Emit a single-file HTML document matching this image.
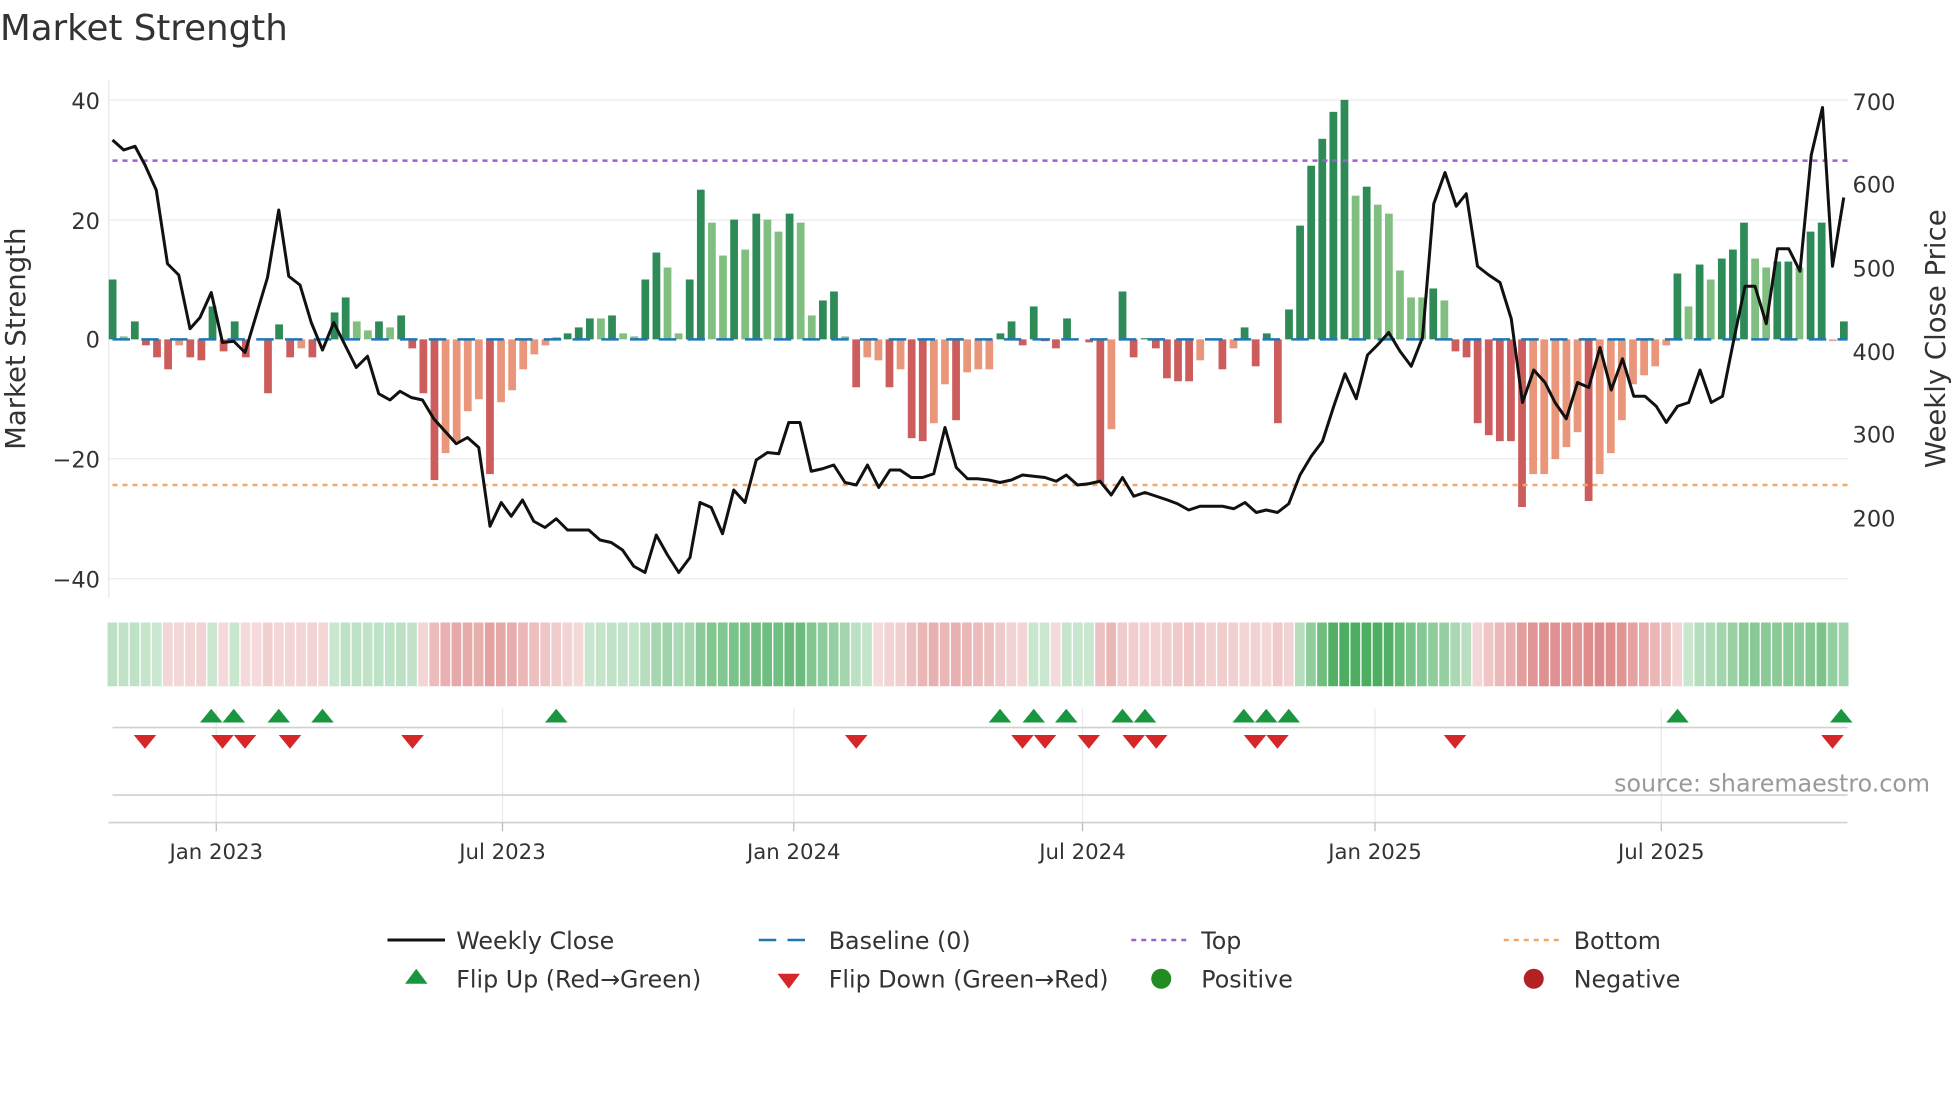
<!DOCTYPE html>
<html><head><meta charset="utf-8"><style>
html,body{margin:0;padding:0;background:#fff;}
svg{display:block;font-family:"DejaVu Sans","Liberation Sans",sans-serif;}
</style></head><body>
<svg id="s" width="1960" height="1102" viewBox="0 0 1568 881.6" xmlns="http://www.w3.org/2000/svg">
<rect width="1568" height="882" fill="#fff"/>
<text x="0" y="32" font-size="28.5" fill="#333">Market Strength</text>
<g stroke="#eceef1" stroke-width="1.2">
<line x1="87" y1="80" x2="1478" y2="80"/><line x1="87" y1="176" x2="1478" y2="176"/>
<line x1="87" y1="367" x2="1478" y2="367"/><line x1="87" y1="463" x2="1478" y2="463"/>
</g>
<line x1="87" y1="64" x2="87" y2="478" stroke="#e6e8eb" stroke-width="1"/>
<g font-size="18" fill="#333" text-anchor="end">
<text x="80" y="87">40</text><text x="80" y="183">20</text><text x="80" y="278">0</text>
<text x="80" y="374">−20</text><text x="80" y="470">−40</text>
</g>
<g font-size="18" fill="#333">
<text x="1482" y="88">700</text><text x="1482" y="154">600</text><text x="1482" y="221">500</text>
<text x="1482" y="288">400</text><text x="1482" y="354">300</text><text x="1482" y="421">200</text>
</g>
<text transform="translate(20,271) rotate(-90)" font-size="22" fill="#333" text-anchor="middle">Market Strength</text>
<text transform="translate(1556,271) rotate(-90)" font-size="22" fill="#333" text-anchor="middle">Weekly Close Price</text>
<g id="bars"></g>
<line x1="90" y1="271.5" x2="1478" y2="271.5" stroke="#1f77b4" stroke-width="2" stroke-dasharray="14 9"/>
<line x1="90" y1="128.5" x2="1478" y2="128.5" stroke="#9b5fd6" stroke-width="2" stroke-dasharray="4 4"/>
<line x1="90" y1="388" x2="1478" y2="388" stroke="#f0a868" stroke-width="2" stroke-dasharray="4 4"/>
<polyline id="price" fill="none" stroke="#111" stroke-width="2.4" stroke-linejoin="round"/>
<g id="heat"></g>
<g stroke="#e8eaed" stroke-width="1">
<line x1="173" y1="567" x2="173" y2="658"/><line x1="402" y1="567" x2="402" y2="658"/>
<line x1="635" y1="567" x2="635" y2="658"/><line x1="866" y1="567" x2="866" y2="658"/>
<line x1="1100" y1="567" x2="1100" y2="658"/><line x1="1329" y1="567" x2="1329" y2="658"/>
</g>
<line x1="90" y1="582" x2="1478" y2="582" stroke="#cfd0d2" stroke-width="1.3"/>
<line x1="90" y1="636" x2="1478" y2="636" stroke="#cfd0d2" stroke-width="1.3"/>
<line x1="87" y1="658" x2="1478" y2="658" stroke="#cfd0d2" stroke-width="1.3"/>
<g stroke="#bbb" stroke-width="1">
<line x1="173" y1="658" x2="173" y2="665"/><line x1="402" y1="658" x2="402" y2="665"/>
<line x1="635" y1="658" x2="635" y2="665"/><line x1="866" y1="658" x2="866" y2="665"/>
<line x1="1100" y1="658" x2="1100" y2="665"/><line x1="1329" y1="658" x2="1329" y2="665"/>
</g>
<g id="marks"></g>
<g font-size="17" fill="#333" text-anchor="middle">
<text x="173" y="687">Jan 2023</text><text x="402" y="687">Jul 2023</text><text x="635" y="687">Jan 2024</text>
<text x="866" y="687">Jul 2024</text><text x="1100" y="687">Jan 2025</text><text x="1329" y="687">Jul 2025</text>
</g>
<text x="1544" y="633" font-size="19" fill="#999" text-anchor="end">source: sharemaestro.com</text>
<g font-size="19" fill="#333">
<line x1="310" y1="752" x2="356" y2="752" stroke="#111" stroke-width="2.4"/><text x="365" y="759">Weekly Close</text>
<line x1="607" y1="752" x2="651" y2="752" stroke="#1f77b4" stroke-width="2" stroke-dasharray="14 9"/><text x="663" y="759">Baseline (0)</text>
<line x1="905" y1="752" x2="949" y2="752" stroke="#9b5fd6" stroke-width="2" stroke-dasharray="4 4"/><text x="961" y="759">Top</text>
<line x1="1203" y1="752" x2="1247" y2="752" stroke="#f0a868" stroke-width="2" stroke-dasharray="4 4"/><text x="1259" y="759">Bottom</text>
<polygon points="324,787 342,787 333,775" fill="#1a9641"/><text x="365" y="790">Flip Up (Red→Green)</text>
<polygon points="622,779 640,779 631,791" fill="#d62728"/><text x="663" y="790">Flip Down (Green→Red)</text>
<circle cx="929" cy="783" r="8" fill="#228b22"/><text x="961" y="790">Positive</text>
<circle cx="1227" cy="783" r="8" fill="#b22222"/><text x="1259" y="790">Negative</text>
</g>
</svg>
<script>
var NS="http://www.w3.org/2000/svg";
var V=[[10,'D'],[0.5,'L'],[3,'D'],[-1,'R'],[-3,'R'],[-5,'R'],[-1,'O'],[-3,'R'],[-3.5,'R'],[5.5,'D'],[-2,'R'],[3,'D'],[-3,'R'],[0,'D'],[-9,'R'],[2.5,'D'],[-3,'R'],[-1.5,'O'],[-3,'R'],[0,'D'],[4.5,'D'],[7,'D'],[3,'L'],[1.5,'L'],[3,'D'],[2,'L'],[4,'D'],[-1.5,'R'],[-9,'R'],[-23.5,'R'],[-19,'O'],[-17,'O'],[-12,'O'],[-10,'O'],[-22.5,'R'],[-10.5,'O'],[-8.5,'O'],[-5,'O'],[-2.5,'O'],[-1,'O'],[0.3,'D'],[1,'D'],[2,'D'],[3.5,'D'],[3.5,'L'],[4,'D'],[1,'L'],[0.5,'L'],[10,'D'],[14.5,'D'],[12,'L'],[1,'L'],[10,'D'],[25,'D'],[19.5,'L'],[14,'L'],[20,'D'],[15,'L'],[21,'D'],[20,'L'],[18,'L'],[21,'D'],[19.5,'L'],[4,'L'],[6.5,'D'],[8,'D'],[0.5,'L'],[-8,'R'],[-3,'O'],[-3.5,'O'],[-8,'R'],[-5,'O'],[-16.5,'R'],[-17,'R'],[-14,'O'],[-7.5,'O'],[-13.5,'R'],[-5.5,'O'],[-5,'O'],[-5,'O'],[1,'D'],[3,'D'],[-1,'R'],[5.5,'D'],[-0.3,'R'],[-1.5,'R'],[3.5,'D'],[0,'D'],[-0.5,'R'],[-24,'R'],[-15,'O'],[8,'D'],[-3,'R'],[0.2,'D'],[-1.5,'R'],[-6.5,'R'],[-7,'R'],[-7,'R'],[-3.5,'O'],[0,'D'],[-5,'R'],[-1.5,'O'],[2,'D'],[-4.5,'R'],[1,'D'],[-14,'R'],[5,'D'],[19,'D'],[29,'D'],[33.5,'D'],[38,'D'],[40,'D'],[24,'L'],[25.5,'D'],[22.5,'L'],[21,'L'],[11.5,'L'],[7,'L'],[7,'L'],[8.5,'D'],[6.5,'L'],[-2,'R'],[-3,'R'],[-14,'R'],[-16,'R'],[-17,'R'],[-17,'R'],[-28,'R'],[-22.5,'O'],[-22.5,'O'],[-20,'O'],[-18,'O'],[-15.5,'O'],[-27,'R'],[-22.5,'O'],[-19,'O'],[-13.5,'O'],[-7.5,'O'],[-6,'O'],[-4.5,'O'],[-1,'O'],[11,'D'],[5.5,'L'],[12.5,'D'],[10,'L'],[13.5,'D'],[15,'D'],[19.5,'D'],[13.5,'L'],[12,'L'],[13,'D'],[13,'D'],[12,'L'],[18,'D'],[19.5,'D'],[-0.3,'P'],[3,'D']];
var C={D:'#2e8b57',L:'#80bf80',R:'#cd5c5c',O:'#e9967a',P:'#e7a0a8'};
var n=V.length,x0=90,x1=1475,dx=(x1-x0)/(n-1);
var bars=document.getElementById('bars'),heat=document.getElementById('heat');
function el(t,a,p){var e=document.createElementNS(NS,t);for(var k in a)e.setAttribute(k,a[k]);p.appendChild(e);return e;}
var ema=0;
for(var i=0;i<n;i++){
 var x=x0+i*dx,v=V[i][0],h=Math.abs(v)*4.79,y=v>=0?271.5-h:271.5;
 if(h>0.3) el('rect',{x:x-3,y:y,width:6.2,height:h,fill:C[V[i][1]]},bars);
 ema=ema*0.7+v*0.3;
 var m=Math.min(Math.abs(ema)/25,1),a=0.25+0.6*m;
 var col=ema>=0?'rgba(46,160,70,'+a.toFixed(2)+')':'rgba(205,80,80,'+(0.2+0.55*m).toFixed(2)+')';
 el('rect',{x:x-4.4+0.4,y:498,width:dx-1.1,height:51,fill:col},heat);
}
var P=[[90,112],[99,120],[108,117],[116,132],[125,152],[134,211],[143,220],[152,263],[160,254],[169,234],[178,274],[187,273],[196,282],[205,252],[214,222],[223,168],[231,221],[240,228],[249,258],[258,280],[267,258],[276,276],[285,294],[294,285],[303,315],[312,320],[320,313],[329,318],[338,320],[347,335],[356,345],[365,355],[374,350],[383,358],[392,421],[401,402],[409,413],[418,400],[427,417],[436,422],[445,415],[454,424],[463,424],[471,424],[480,432],[489,434],[498,440],[507,453],[516,458],[525,428],[534,444],[543,458],[552,446],[560,402],[569,406],[578,427],[587,392],[596,402],[605,368],[614,362],[623,363],[631,338],[640,338],[649,377],[658,375],[667,372],[676,386],[685,388],[694,372],[703,390],[712,376],[720,376],[729,382],[738,382],[747,379],[756,342],[765,374],[774,383],[782,383],[791,384],[800,386],[809,384],[818,380],[827,381],[836,382],[845,385],[853,380],[862,388],[871,387],[880,385],[889,396],[898,382],[907,397],[916,394],[925,397],[934,400],[942,403],[951,408],[960,405],[969,405],[978,405],[987,407],[996,402],[1005,410],[1013,408],[1022,410],[1031,403],[1040,380],[1049,365],[1058,353],[1067,325],[1076,299],[1085,319],[1094,284],[1102,276],[1111,266],[1120,281],[1129,293],[1138,270],[1147,163],[1156,138],[1165,165],[1173,155],[1182,213],[1191,220],[1200,226],[1209,255],[1218,322],[1227,296],[1236,306],[1244,322],[1253,335],[1262,306],[1271,310],[1280,278],[1289,312],[1298,287],[1307,317],[1316,317],[1325,325],[1333,338],[1342,325],[1351,322],[1360,296],[1369,322],[1378,317],[1387,272],[1396,229],[1404,229],[1413,259],[1422,199],[1431,199],[1440,217],[1449,124],[1458,86],[1466,213],[1475,158]];
document.getElementById('price').setAttribute('points',P.map(function(p){return p.join(',')}).join(' '));
var marks=document.getElementById('marks');
[169,187,223,258,445,800,827,853,898,916,995,1013,1031,1342,1473].forEach(function(x){el('polygon',{points:(x-9)+',578 '+(x+9)+',578 '+x+',567',fill:'#1a9641'},marks);});
[116,178,196,232,330,685,818,836,871,907,925,1004,1022,1164,1466].forEach(function(x){el('polygon',{points:(x-9)+',588 '+(x+9)+',588 '+x+',599',fill:'#d62728'},marks);});
</script>
</body></html>
